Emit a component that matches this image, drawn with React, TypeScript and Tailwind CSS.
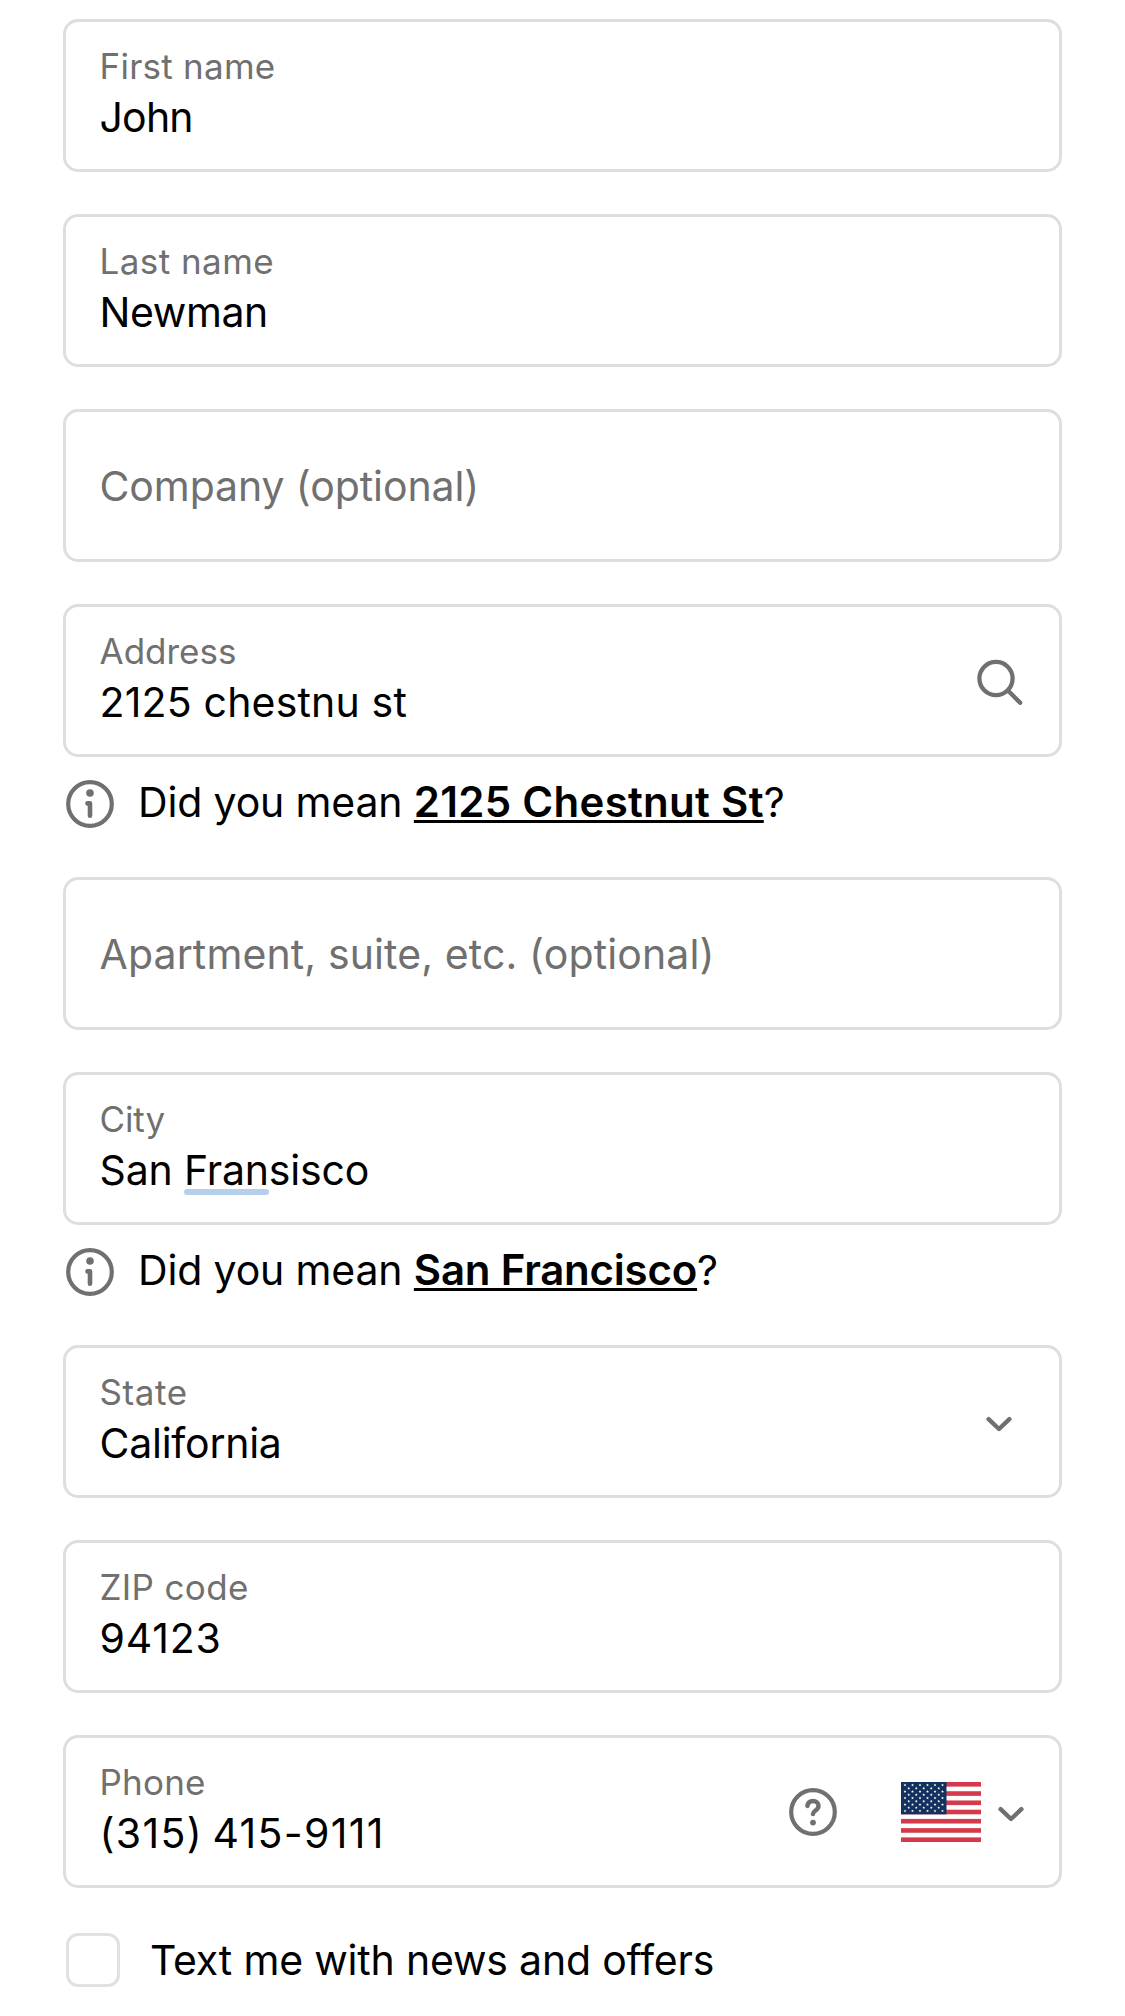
import type { ReactNode } from "react";

function Field({ label, labelClass = "", value, valueClass = "", trailing }: {
  label: string;
  labelClass?: string;
  value?: ReactNode;
  valueClass?: string;
  trailing?: ReactNode;
}) {
  return (
    <div className="flex h-[153px] items-center justify-between rounded-[15px] border-[3px] border-[#dedede] bg-white pl-[33.5px]">
      {value === undefined ? (
        <div className={`text-[41px] leading-[50px] whitespace-nowrap text-[#707070] ${labelClass}`}>{label}</div>
      ) : (
        <div className="self-start pt-[23px] whitespace-nowrap">
          <div className={`text-[35px] leading-[42px] text-[#707070] ${labelClass}`}>{label}</div>
          <div className={`mt-[5px] text-[41px] leading-[50px] text-black ${valueClass}`}>{value}</div>
        </div>
      )}
      {trailing}
    </div>
  );
}

function Suggestion({ text, textClass }: { text: string; textClass: string }) {
  return (
    <div className="mt-5 mb-[50px] flex h-[50px] gap-6 pl-[3px]">
      <svg className="mt-[3px] size-12 shrink-0" viewBox="0 0 48 48" fill="none" stroke="#707070">
        <circle cx="24" cy="24" r="21.8" strokeWidth="4.2" />
        <circle cx="24" cy="13" r="3.8" fill="#707070" stroke="none" />
        <path d="M21.5 23.4H24V35.8" strokeWidth="4.6" strokeLinecap="round" strokeLinejoin="round" />
      </svg>
      <div className="text-[41px] leading-[50px] tracking-[-0.15px] whitespace-pre text-black">
        {"Did you mean "}
        <a className={`text-[42px] leading-[0] font-semibold underline decoration-[3px] underline-offset-[3px] [text-decoration-skip-ink:none] ${textClass}`}>{text}</a>
        ?
      </div>
    </div>
  );
}

function Chevron() {
  return (
    <svg className="mt-[5px] h-4 w-7 shrink-0" viewBox="0 0 28 16" fill="none" stroke="#707070" strokeWidth="4.4" strokeLinecap="round" strokeLinejoin="round">
      <path d="M3.6 3.2L14 13L24.4 3.2" />
    </svg>
  );
}

function SearchIcon() {
  return (
    <svg className="mr-9 size-12 shrink-0" viewBox="0 0 48 48" fill="none" stroke="#707070" strokeLinecap="round">
      <circle cx="21" cy="21.5" r="16.6" strokeWidth="4.3" />
      <path d="M33.2 33.8L45.2 45.8" strokeWidth="4.3" />
    </svg>
  );
}

function HelpIcon() {
  return (
    <svg className="size-12 shrink-0" viewBox="0 0 48 48" fill="none" stroke="#707070">
      <circle cx="24" cy="24" r="21.8" strokeWidth="4.2" />
      <path d="M18.4 17.9C18.9 15 21.1 13 24 13C27.2 13 29.5 15.1 29.5 17.8C29.5 20.2 28.2 21.3 26.6 22.5C25 23.7 24 24.3 24 26" strokeWidth="4.5" strokeLinecap="round" />
      <circle cx="24" cy="34.6" r="2.9" fill="#707070" stroke="none" />
    </svg>
  );
}

function UsFlag() {
  const stripe = 60 / 13;
  const stars: [number, number][] = [];
  for (let row = 0; row < 9; row++) {
    const odd = row % 2;
    for (let col = 0; col < 6 - odd; col++) {
      stars.push([4 + odd * 3.75 + col * 7.5, 3.1 + row * 3.23]);
    }
  }
  return (
    <svg className="h-[60px] w-20 shrink-0" viewBox="0 0 80 60">
      <rect width="80" height="60" fill="#ffffff" />
      {[0, 2, 4, 6, 8, 10, 12].map((n) => (
        <rect key={n} y={n * stripe} width="80" height={stripe} fill="#d43a4b" />
      ))}
      <rect width="45.5" height={7 * stripe} fill="#12315f" />
      {stars.map(([x, y], i) => (
        <path
          key={i}
          transform={`translate(${x} ${y})`}
          d="M0 -1.5L.4 -.5L1.45 -.45L.62 .2L.9 1.25L0 .65L-.9 1.25L-.62 .2L-1.45 -.45L-.4 -.5Z"
          fill="#ffffff"
        />
      ))}
    </svg>
  );
}

export default function App() {
  return (
    <div className="h-[2016px] w-[1125px] overflow-hidden bg-white pt-[19px] pr-[63px] pl-[63px] font-['Inter',sans-serif]">
      <div className="flex flex-col gap-[42px]">
        <Field label="First name" labelClass="tracking-[0.25px]" value="John" valueClass="tracking-[-0.8px]" />
        <Field label="Last name" labelClass="tracking-[0.45px]" value="Newman" valueClass="tracking-[-0.4px]" />
        <Field label="Company (optional)" labelClass="tracking-[-0.1px]" />
        <Field label="Address" labelClass="tracking-[0px]" value="2125 chestnu st" valueClass="tracking-[0.18px]" trailing={<SearchIcon />} />
      </div>
      <Suggestion text="2125 Chestnut St" textClass="tracking-[0.28px]" />
      <div className="flex flex-col gap-[42px]">
        <Field label="Apartment, suite, etc. (optional)" labelClass="tracking-[0.12px]" />
        <Field
          label="City"
          labelClass="tracking-[-0.1px]"
          value={
            <>
              San{" "}
              <span className="relative">
                Fran
                <span className="absolute inset-x-0 bottom-0 h-[6px] rounded-sm bg-[#b5d0ec]" />
              </span>
              sisco
            </>
          }
          valueClass="tracking-[-0.18px]"
        />
      </div>
      <Suggestion text="San Francisco" textClass="tracking-[-0.22px]" />
      <div className="flex flex-col gap-[42px]">
        <Field label="State" labelClass="tracking-[0.6px]" value="California" valueClass="tracking-[-0.25px]" trailing={<div className="mr-[46px] flex"><Chevron /></div>} />
        <Field label="ZIP code" labelClass="tracking-[0.35px]" value="94123" valueClass="tracking-[0.8px]" />
        <Field
          label="Phone"
          labelClass="tracking-[0.2px]"
          value="(315) 415-9111"
          valueClass="tracking-[1.35px] [word-spacing:-3.5px]"
          trailing={
            <div className="mr-[34px] flex items-center">
              <HelpIcon />
              <div className="ml-16 flex items-center gap-4">
                <UsFlag />
                <Chevron />
              </div>
            </div>
          }
        />
      </div>
      <label className="mt-[45px] flex gap-[30px] pl-[3px]">
        <span className="size-[54px] shrink-0 rounded-[12px] border-[3px] border-[#e1e1e1]" />
        <span className="mt-[2px] text-[41px] leading-[50px] tracking-[-0.19px] whitespace-nowrap text-black">Text me with news and offers</span>
      </label>
    </div>
  );
}
